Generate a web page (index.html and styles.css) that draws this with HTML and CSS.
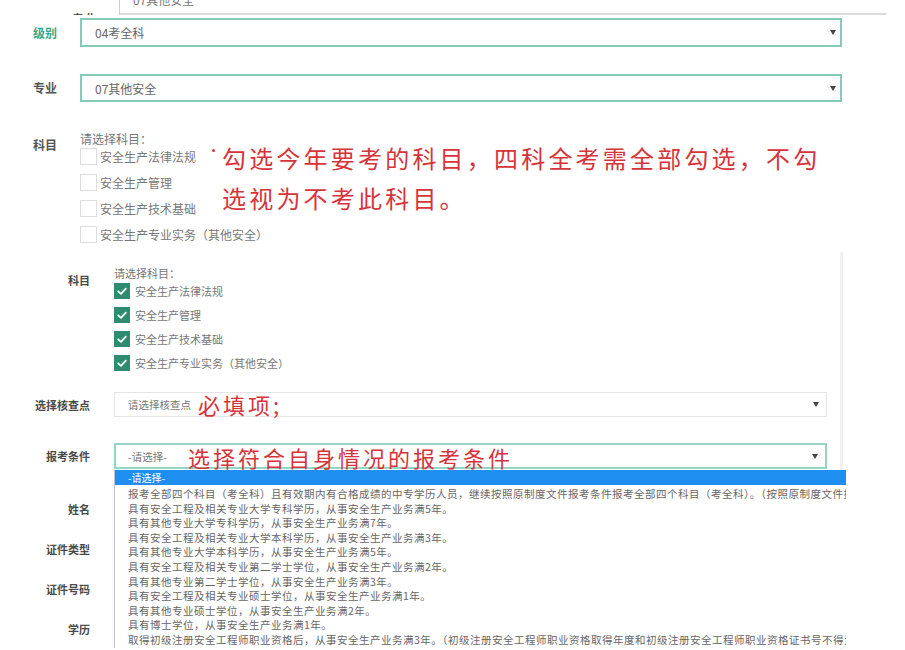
FILE: index.html
```html
<!DOCTYPE html>
<html lang="zh-CN">
<head>
<meta charset="utf-8">
<title>报考信息</title>
<link rel="stylesheet" href="styles.css">
</head>
<body>
<div class="page">
  <section class="panel-a">
    <div class="cut-row">
      <span class="cut-label">专业</span>
      <div class="cut-box"><span class="cut-text">07其他安全</span></div>
    </div>

    <div class="row-a row-level">
      <span class="lbl-a lbl-green">级别</span>
      <div class="sel-a"><span>04考全科</span><i class="caret"></i></div>
    </div>

    <div class="row-a row-major">
      <span class="lbl-a">专业</span>
      <div class="sel-a"><span>07其他安全</span><i class="caret"></i></div>
    </div>

    <div class="row-a row-subject">
      <span class="lbl-a lbl-subject">科目</span>
      <div class="field-a">
        <div class="prompt-a">请选择科目：</div>
        <ul class="checks-a">
          <li><span class="box-empty"></span>安全生产法律法规</li>
          <li><span class="box-empty"></span>安全生产管理</li>
          <li><span class="box-empty"></span>安全生产技术基础</li>
          <li><span class="box-empty"></span>安全生产专业实务（其他安全）</li>
        </ul>
        <span class="note-dot"></span>
        <p class="note note-big">勾选今年要考的科目，四科全考需全部勾选，不勾<br>选视为不考此科目。</p>
      </div>
    </div>
  </section>

  <section class="panel-b">
    <div class="row-b row-subject-b">
      <span class="lbl-b lbl-subject-b">科目</span>
      <div class="field-b">
        <div class="prompt-b">请选择科目：</div>
        <ul class="checks-b">
          <li><span class="box-checked"><svg viewBox="0 0 16 16" width="16" height="16"><path d="M4.2 8.3 L7 10.8 L11.8 5.6" fill="none" stroke="#fff" stroke-width="1.8" stroke-linecap="round" stroke-linejoin="round"/></svg></span>安全生产法律法规</li>
          <li><span class="box-checked"><svg viewBox="0 0 16 16" width="16" height="16"><path d="M4.2 8.3 L7 10.8 L11.8 5.6" fill="none" stroke="#fff" stroke-width="1.8" stroke-linecap="round" stroke-linejoin="round"/></svg></span>安全生产管理</li>
          <li><span class="box-checked"><svg viewBox="0 0 16 16" width="16" height="16"><path d="M4.2 8.3 L7 10.8 L11.8 5.6" fill="none" stroke="#fff" stroke-width="1.8" stroke-linecap="round" stroke-linejoin="round"/></svg></span>安全生产技术基础</li>
          <li><span class="box-checked"><svg viewBox="0 0 16 16" width="16" height="16"><path d="M4.2 8.3 L7 10.8 L11.8 5.6" fill="none" stroke="#fff" stroke-width="1.8" stroke-linecap="round" stroke-linejoin="round"/></svg></span>安全生产专业实务（其他安全）</li>
        </ul>
      </div>
    </div>

    <div class="row-b row-check">
      <span class="lbl-b">选择核查点</span>
      <div class="sel-b sel-plain">
        <span class="placeholder">请选择核查点</span><i class="caret"></i>
        <span class="note note-mid note-required">必填项;</span>
      </div>
    </div>

    <div class="row-b row-cond">
      <span class="lbl-b">报考条件</span>
      <div class="sel-b sel-teal">
        <span class="placeholder">-请选择-</span><i class="caret"></i>
        <span class="note note-mid note-cond">选择符合自身情况的报考条件</span>
        <ul class="dropdown">
          <li class="opt-active">-请选择-</li>
          <li>报考全部四个科目（考全科）且有效期内有合格成绩的中专学历人员，继续按照原制度文件报考条件报考全部四个科目（考全科）。（按照原制度文件报考条件报考全部四个科目）</li>
          <li>具有安全工程及相关专业大学专科学历，从事安全生产业务满5年。</li>
          <li>具有其他专业大学专科学历，从事安全生产业务满7年。</li>
          <li>具有安全工程及相关专业大学本科学历，从事安全生产业务满3年。</li>
          <li>具有其他专业大学本科学历，从事安全生产业务满5年。</li>
          <li>具有安全工程及相关专业第二学士学位，从事安全生产业务满2年。</li>
          <li>具有其他专业第二学士学位，从事安全生产业务满3年。</li>
          <li>具有安全工程及相关专业硕士学位，从事安全生产业务满1年。</li>
          <li>具有其他专业硕士学位，从事安全生产业务满2年。</li>
          <li>具有博士学位，从事安全生产业务满1年。</li>
          <li>取得初级注册安全工程师职业资格后，从事安全生产业务满3年。（初级注册安全工程师职业资格取得年度和初级注册安全工程师职业资格证书号不得为空）</li>
        </ul>
      </div>
    </div>

    <div class="row-b row-info"><span class="lbl-b">姓名</span></div>
    <div class="row-b row-info"><span class="lbl-b">证件类型</span></div>
    <div class="row-b row-info"><span class="lbl-b">证件号码</span></div>
    <div class="row-b row-info"><span class="lbl-b">学历</span></div>
  </section>
</div>
</body>
</html>
```

FILE: styles.css
```css
html, body {
  margin: 0;
  padding: 0;
  background: #ffffff;
  overflow: hidden;
}

.page {
  width: 905px;
  height: 650px;
  overflow: hidden;
  font-family: "Noto Sans CJK SC", "Noto Sans", sans-serif;
  color: #666;
}

ul {
  list-style: none;
  margin: 0;
  padding: 0;
}

p {
  margin: 0;
}

/* ---------- panel A ---------- */
.panel-a {
  padding-left: 33px;
}

.cut-row {
  display: flex;
  height: 15px;
  width: 814px;
  margin-left: 39px;
  overflow: hidden;
}

.cut-label {
  font-size: 12px;
  font-weight: bold;
  color: #555;
  line-height: 16px;
  margin-top: 11px;
  width: 24px;
}

.cut-box {
  flex: 1;
  margin-left: 23px;
  height: 13px;
  border-left: 1px solid #cfcfcf;
  border-bottom: 2px solid #dadada;
}

.cut-text {
  display: block;
  padding-left: 13px;
  font-size: 12px;
  line-height: 16px;
  margin-top: -8px;
  color: #777;
}

.row-a {
  display: flex;
  align-items: center;
}

.row-level {
  margin-top: 3px;
}

.row-major {
  margin-top: 27px;
}

.row-subject {
  margin-top: 29px;
  align-items: flex-start;
}

.lbl-a {
  width: 47px;
  font-size: 12px;
  font-weight: bold;
  color: #555;
  line-height: 16px;
}

.lbl-green {
  color: #3aa883;
}

.lbl-subject {
  margin-top: 6px;
}

.sel-a {
  width: 762px;
  height: 29px;
  box-sizing: border-box;
  border: 2px solid #84ccb9;
  display: flex;
  align-items: center;
  padding: 0 4px 0 13px;
  font-size: 12px;
  color: #666;
}

.row-major .sel-a {
  height: 28px;
}

.sel-a span {
  flex: 1;
}

.caret {
  width: 0;
  height: 0;
  border-left: 3px solid transparent;
  border-right: 3px solid transparent;
  border-top: 5px solid #444;
}

.field-a {
  position: relative;
  flex: 1;
}

.prompt-a {
  font-size: 12px;
  line-height: 16px;
  color: #777;
}

.checks-a {
  margin-top: 1px;
  display: flex;
  flex-direction: column;
  gap: 9px;
}

.checks-a li {
  display: flex;
  align-items: center;
  height: 17px;
  font-size: 12px;
  color: #777;
}

.box-empty {
  width: 17px;
  height: 17px;
  box-sizing: border-box;
  border: 1px solid #dddddd;
  margin-right: 3px;
  background: #fff;
}

.note {
  position: absolute;
  color: #d6343a;
  white-space: nowrap;
  font-family: "Noto Sans CJK SC", sans-serif;
}

.note-big {
  left: 142px;
  top: 7px;
  font-size: 24px;
  line-height: 40px;
  letter-spacing: 3.2px;
}

.note-dot {
  position: absolute;
  left: 132px;
  top: 18px;
  width: 3px;
  height: 3px;
  border-radius: 50%;
  background: #d6343a;
}

/* ---------- panel B ---------- */
.panel-b {
  margin-top: 9px;
  width: 840px;
  border-right: 3px solid #f1f1f1;
  padding-top: 14px;
}

.row-b {
  display: flex;
  align-items: center;
}

.lbl-b {
  width: 90px;
  text-align: right;
  font-size: 11px;
  font-weight: bold;
  color: #4a4a4a;
  line-height: 14px;
  margin-right: 24px;
}

.row-subject-b {
  align-items: flex-start;
}

.lbl-subject-b {
  margin-top: 7px;
}

.prompt-b {
  font-size: 11px;
  line-height: 14px;
  color: #777;
}

.checks-b {
  margin-top: 3px;
  display: flex;
  flex-direction: column;
  gap: 8px;
}

.checks-b li {
  display: flex;
  align-items: center;
  height: 16px;
  font-size: 11px;
  color: #777;
}

.box-checked {
  width: 16px;
  height: 16px;
  background: #2e8d70;
  margin-right: 5px;
  display: flex;
}

.row-check {
  margin-top: 21px;
}

.row-cond {
  margin-top: 26px;
}

.sel-b {
  position: relative;
  width: 713px;
  box-sizing: border-box;
  display: flex;
  align-items: center;
  padding: 0 7px 0 13px;
}

.sel-plain {
  height: 25px;
  border: 1px solid #e4e4e4;
}

.sel-teal {
  height: 26px;
  border: 2px solid #92d6c6;
  padding-left: 12px;
}

.placeholder {
  flex: 1;
  font-size: 10.5px;
  color: #777;
}

.note-mid {
  font-size: 22px;
  line-height: 26px;
  letter-spacing: 3px;
}

.note-required {
  left: 83px;
  top: -2px;
}

.note-cond {
  left: 72px;
  top: -1px;
}

.dropdown {
  position: absolute;
  left: -2px;
  top: 25px;
  width: 732px;
  background: #fff;
  border-left: 1px solid #b9c4d8;
  box-sizing: border-box;
}

.dropdown li {
  height: 14.6px;
  line-height: 14.6px;
  padding-left: 13px;
  font-size: 10.5px;
  letter-spacing: 0.5px;
  color: #666;
  white-space: nowrap;
  overflow: hidden;
}

.dropdown .opt-active {
  height: 15px;
  line-height: 15px;
  background: #1e8ff0;
  color: #fff;
  font-size: 10px;
  letter-spacing: 0;
  margin-bottom: 2px;
}

.row-cond {
  z-index: 2;
}

.row-info {
  height: 40px;
}

.row-cond + .row-info {
  margin-top: 20px;
}
```
